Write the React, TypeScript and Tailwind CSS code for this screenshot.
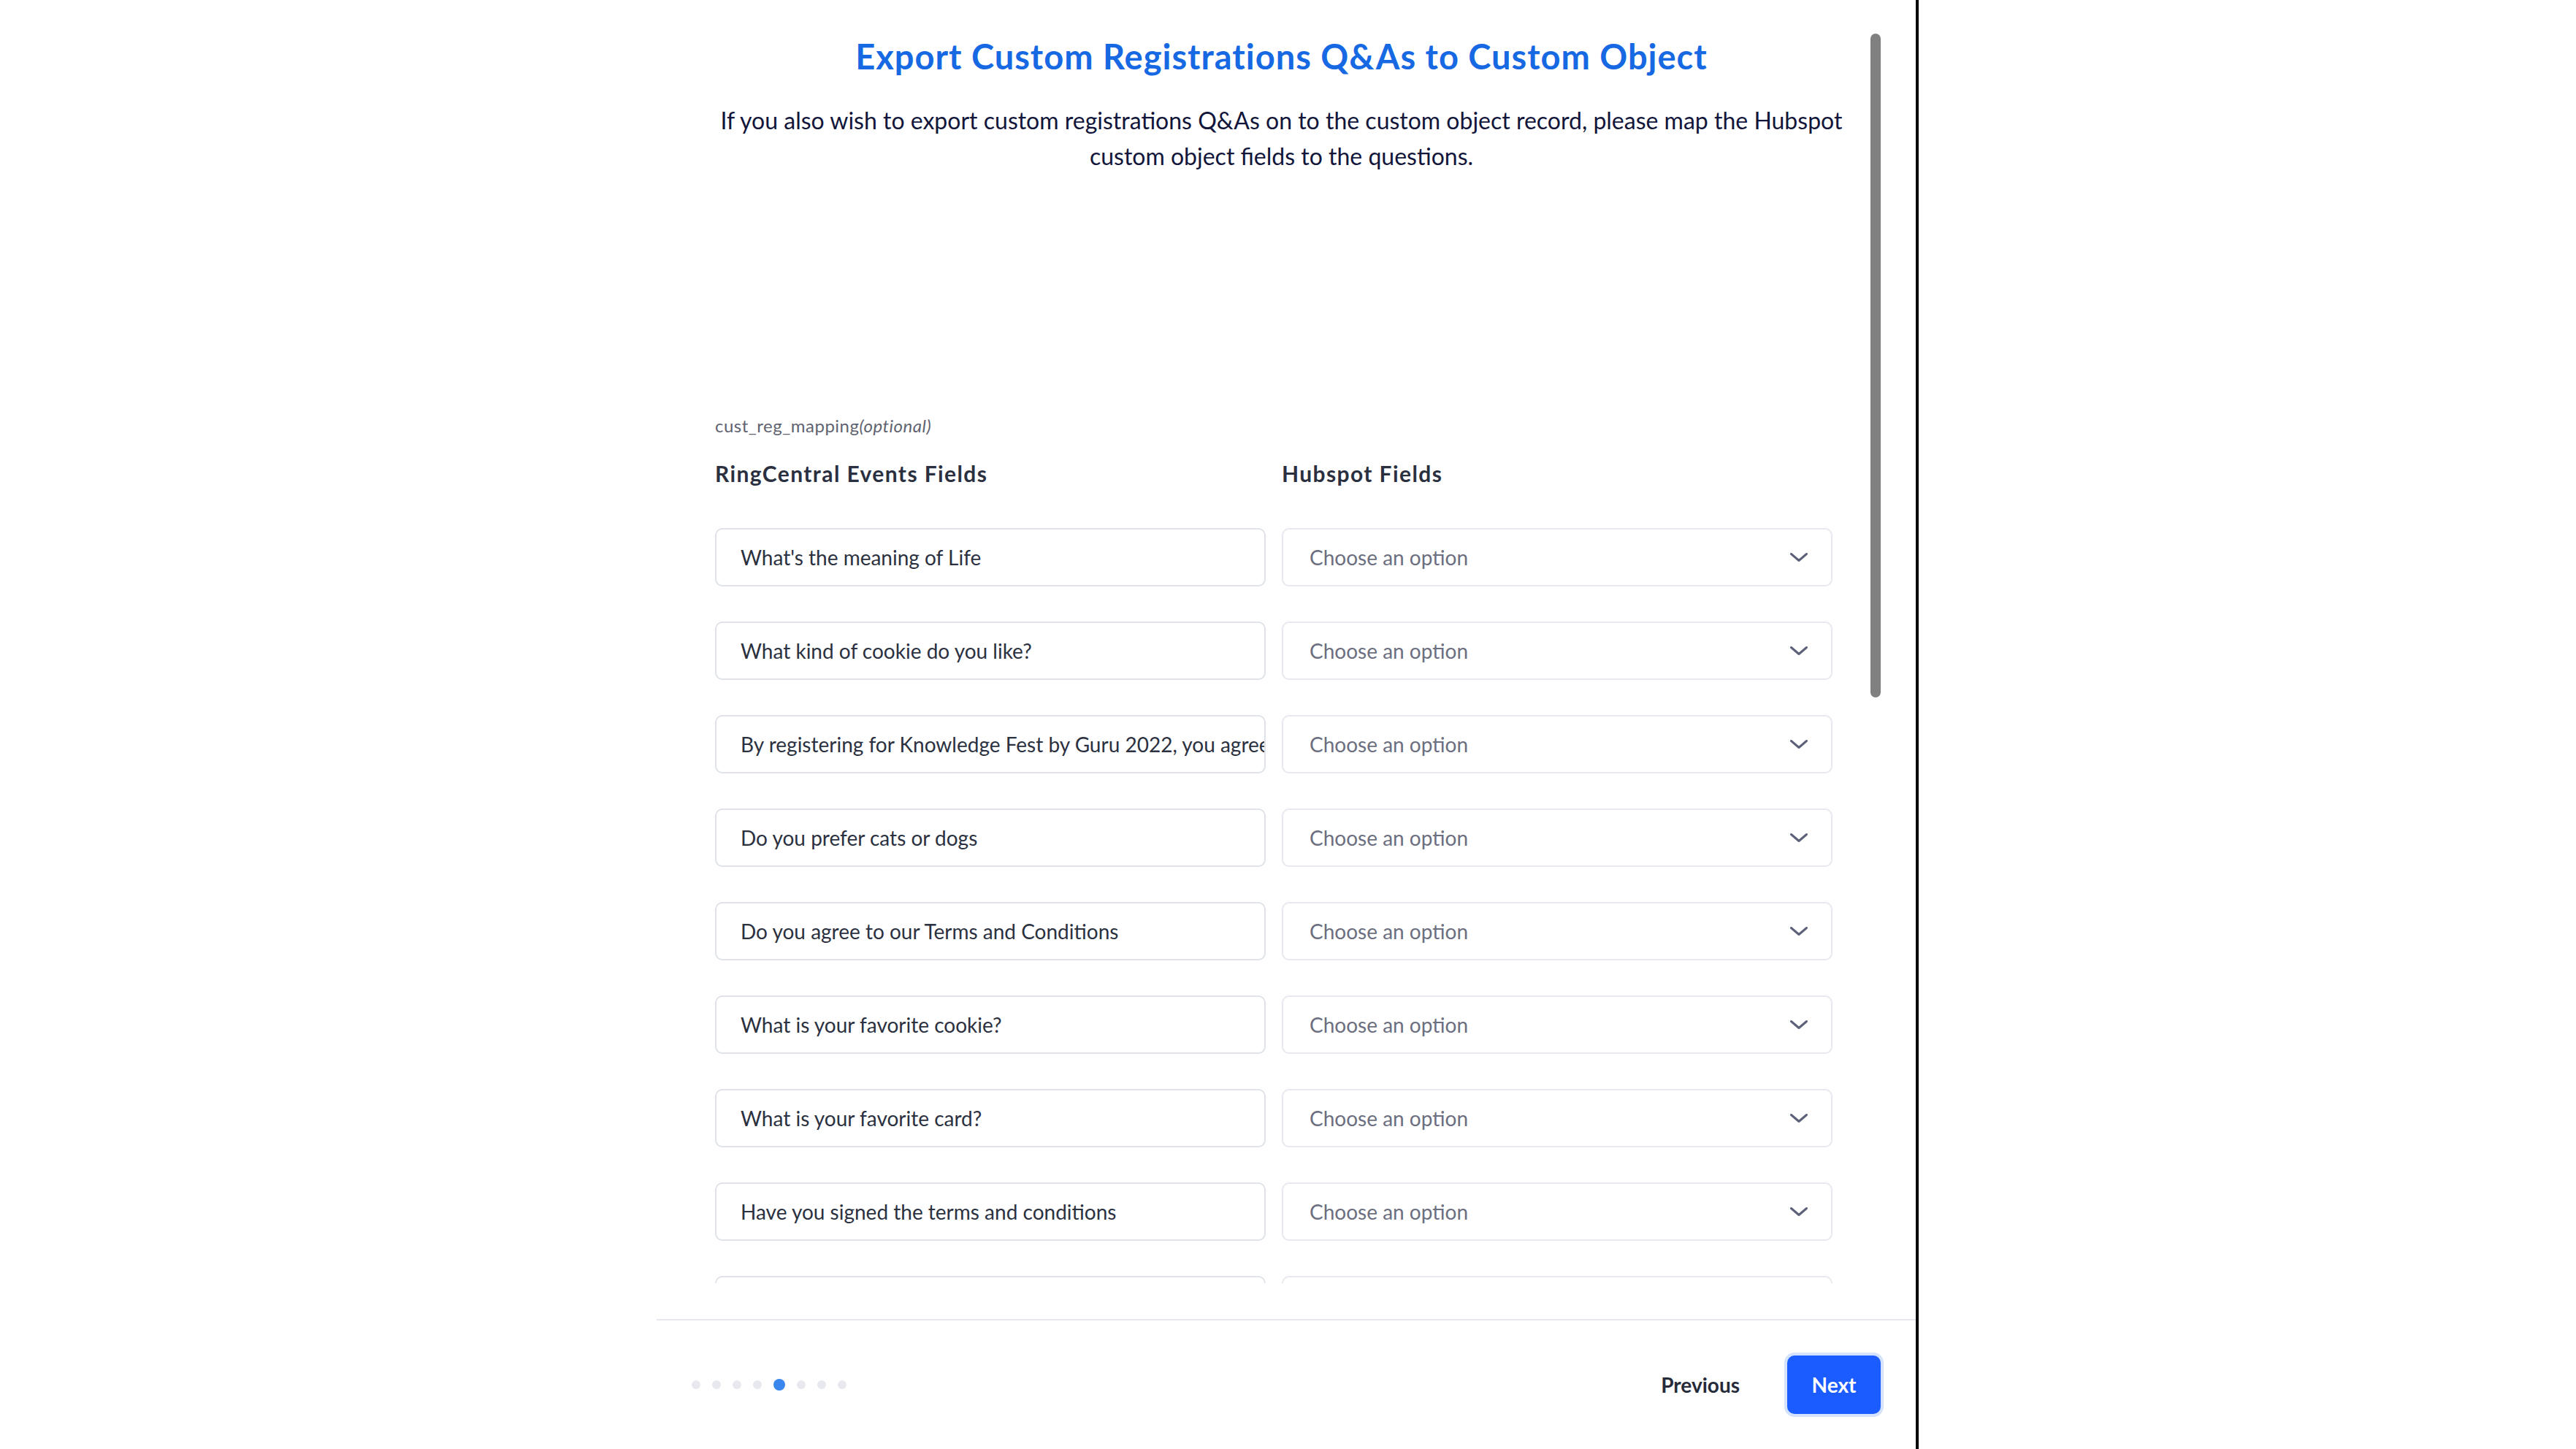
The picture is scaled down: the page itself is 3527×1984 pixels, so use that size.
const questions = [
  "What's the meaning of Life",
  "What kind of cookie do you like?",
  "By registering for Knowledge Fest by Guru 2022, you agree to the terms and conditions of the event",
  "Do you prefer cats or dogs",
  "Do you agree to our Terms and Conditions",
  "What is your favorite cookie?",
  "What is your favorite card?",
  "Have you signed the terms and conditions",
  "",
];

function Chevron() {
  return (
    <svg width="24" height="12" viewBox="0 0 24 12" fill="none" className="shrink-0">
      <path d="M1.5 1.5 L12 10.5 L22.5 1.5" stroke="#5c6078" strokeWidth="3" strokeLinecap="round" strokeLinejoin="round" />
    </svg>
  );
}

function MappingRow({ question }: { question: string }) {
  return (
    <>
      <div className="h-[80px] flex items-center border-2 border-[#dfe3e9] rounded-[10px] pl-[33px] overflow-hidden whitespace-nowrap text-[28px] text-[#2b3140]">
        {question}
      </div>
      <div className="h-[80px] flex items-center justify-between border-2 border-[#e8e9ef] rounded-[10px] pl-[36px] pr-[32px] text-[28px] text-[#6b6f80]">
        <span>Choose an option</span>
        <Chevron />
      </div>
    </>
  );
}

export default function App() {
  const steps = [0, 1, 2, 3, 4, 5, 6, 7];
  const current = 4;

  return (
    <div className="w-full h-[1984px] bg-white flex font-['Lato',sans-serif]">
      <div className="w-[899px] shrink-0" />
      <div className="w-[1728px] shrink-0 h-full flex flex-col border-r-4 border-black">
        <div className="relative h-[1757px] shrink-0 overflow-hidden">
          <div className="pl-[80px] w-[1631px]">
            <h1 className="pt-[47px] text-center text-[47px] leading-[60px] tracking-[1px] font-bold text-[#1668e3]">
              Export Custom Registrations Q&amp;As to Custom Object
            </h1>
            <p className="mt-[33px] text-center text-[32px] leading-[49px] text-[#11163a]">
              If you also wish to export custom registrations Q&amp;As on to the custom object record, please map the Hubspot
              <br />
              custom object fields to the questions.
            </p>

            <div className="mt-[330px] text-[24px] leading-[30px] tracking-[0.5px] text-[#5f6370]">
              cust_reg_mapping<span className="italic">(optional)</span>
            </div>

            <div className="mt-[32px] grid grid-cols-[754px_754px] gap-x-[22px] text-[30px] leading-[36px] tracking-[1.4px] font-bold text-[#2b3040]">
              <div>RingCentral Events Fields</div>
              <div>Hubspot Fields</div>
            </div>

            <div className="mt-[57px] grid grid-cols-[754px_754px] gap-x-[22px] gap-y-[48px]">
              {questions.map((q, i) => (
                <MappingRow key={i} question={q} />
              ))}
            </div>
          </div>

          {/* scrollbar thumb */}
          <div className="absolute right-[48px] top-[46px] w-[14px] h-[909px] rounded-full bg-[#808080]" />
        </div>

        <div className="flex-1" />
        <div className="h-[2px] bg-[#e7e8ee]" />

        <div className="h-[176px] shrink-0 flex items-center justify-between px-[48px]">
          <div className="flex items-center gap-[16px]">
            {steps.map((s) =>
              s === current ? (
                <span key={s} className="w-[16px] h-[16px] rounded-full bg-[#3b86ec]" />
              ) : (
                <span key={s} className="w-[12px] h-[12px] rounded-full bg-[#e8e9ee]" />
              )
            )}
          </div>
          <div className="flex items-center gap-[37px]">
            <button className="px-[28px] h-[80px] text-[28px] font-bold text-[#262b3a]">Previous</button>
            <button className="w-[128px] h-[80px] rounded-[10px] bg-[#1a5cff] text-white text-[28px] font-bold ring-4 ring-[#d4e2fc]">
              Next
            </button>
          </div>
        </div>
      </div>
    </div>
  );
}
